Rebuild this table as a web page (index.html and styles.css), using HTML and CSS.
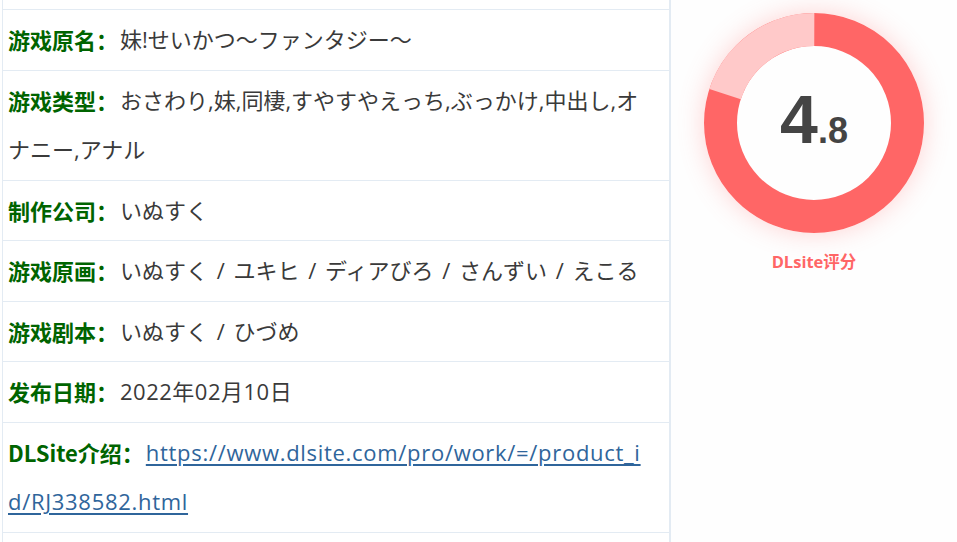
FILE: index.html
```html
<!DOCTYPE html>
<html lang="zh">
<head>
<meta charset="utf-8">
<link rel="stylesheet" href="styles.css">
</head>
<body>
<div class="wrap">
  <div class="info">
    <div class="row cut-top"></div>
    <div class="row"><span class="lbl">游戏原名：</span><span class="val">妹!せいかつ～ファンタジー～</span></div>
    <div class="row"><span class="lbl">游戏类型：</span><span class="val">おさわり,妹,同棲,すやすやえっち,ぶっかけ,中出し,オナニー,アナル</span></div>
    <div class="row"><span class="lbl">制作公司：</span><span class="val">いぬすく</span></div>
    <div class="row"><span class="lbl">游戏原画：</span><span class="val">いぬすく / ユキヒ / ディアびろ / さんずい / えこる</span></div>
    <div class="row"><span class="lbl">游戏剧本：</span><span class="val">いぬすく / ひづめ</span></div>
    <div class="row"><span class="lbl">发布日期：</span><span class="val date">2022年02月10日</span></div>
    <div class="row"><span class="lbl">DLSite介绍：</span><a class="link" href="#">https://www.dlsite.com/pro/work/=/product_id/RJ338582.html</a></div>
    <div class="row cut-bottom"></div>
  </div>
  <div class="score">
    <div class="donut">
      <svg class="ring" width="220" height="220" viewBox="0 0 220 220">
        <circle cx="110" cy="110" r="93.5" fill="none" stroke="#ff6666" stroke-width="33"/>
        <circle cx="110" cy="110" r="93.5" fill="none" stroke="#ffc9c9" stroke-width="33" stroke-dasharray="117.5 600" transform="rotate(-162 110 110)"/>
      </svg>
      <div class="num"><span class="big">4</span><span class="small">.8</span></div>
    </div>
    <div class="cap">DLsite评分</div>
  </div>
</div>
</body>
</html>
```

FILE: styles.css
```css
html, body {
  margin: 0;
  padding: 0;
  background: #fff;
}
body {
  font-family: "Open Sans", "Noto Sans CJK SC", sans-serif;
  color: #3a3a3a;
}
.wrap {
  display: flex;
  margin-left: 2px;
  width: 954px;
  border-left: 1px solid #e3ebf3;
  border-right: 1px solid #e3ebf3;
  height: 542px;
  overflow: hidden;
}
.info {
  width: 666px;
  flex: none;
  border-right: 2px solid #e3ebf3;
}
.row {
  border-bottom: 1px solid #e3ebf3;
  padding: 5px 20px 5px 5px;
  font-size: 22px;
  line-height: 49.5px;
  word-break: break-all;
  word-spacing: 3px;
}
.row.cut-top {
  height: 9px;
  padding: 0;
}
.row.cut-bottom {
  height: 20px;
  border-bottom: none;
}
.lbl,
.val,
.link {
  vertical-align: top;
}
.lbl {
  color: #006400;
  font-weight: bold;
  font-family: "Noto Sans CJK SC", sans-serif;
  margin-right: 2px;
}
.date {
  letter-spacing: 0.5px;
}
.link {
  color: #2f659b;
  text-decoration: underline;
  text-underline-offset: 3px;
  text-decoration-thickness: 1.5px;
  letter-spacing: 0.7px;
}
.score {
  flex: 1;
  display: flex;
  flex-direction: column;
  align-items: center;
  padding-top: 13px;
  background: #fefefe;
}
.donut {
  position: relative;
  width: 220px;
  height: 220px;
  border-radius: 50%;
  box-shadow: 0 0 26px rgba(255, 110, 110, 0.3);
}
.ring {
  display: block;
}
.num {
  position: absolute;
  inset: 0;
  display: flex;
  justify-content: center;
  align-items: baseline;
  padding-top: 72px;
  box-sizing: border-box;
  color: #444;
  font-family: "Liberation Sans", Arial, sans-serif;
  font-weight: bold;
  line-height: 1;
}
.big {
  font-size: 68px;
}
.small {
  font-size: 36px;
}
.cap {
  margin-top: 16px;
  color: #ff6666;
  font-weight: bold;
  font-size: 16.5px;
  font-family: "Open Sans", "Noto Sans CJK SC", sans-serif;
}
```
